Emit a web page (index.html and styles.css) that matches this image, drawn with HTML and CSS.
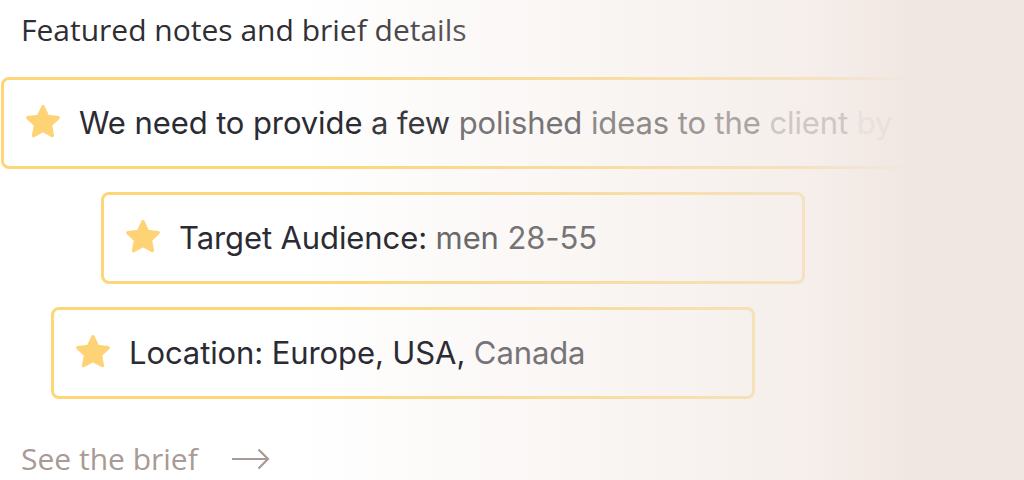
FILE: index.html
```html
<!DOCTYPE html>
<html lang="en">
<head>
<meta charset="utf-8">
<title>Featured notes</title>
<link rel="stylesheet" href="styles.css">
</head>
<body>
<main class="page">
  <h1 class="title">Featured notes and brief details</h1>
  <ul class="notes">
    <li class="note note-lead">
      <svg class="star" viewBox="2 2 20 20" aria-hidden="true"><polygon points="12,3 14.7,8.7 20.9,9.5 16.4,13.8 17.5,20 12,17 6.5,20 7.6,13.8 3.1,9.5 9.3,8.7"/></svg>
      <span class="note-text">We need to provide <span class="tone-1">a few</span> <span class="tone-3">polished</span> <span class="tone-4">ideas</span> <span class="tone-5">to</span> <span class="tone-6">the</span> <span class="tone-7">client</span> <span class="tone-8">by</span></span>
    </li>
    <li class="note note-far">
      <svg class="star" viewBox="2 2 20 20" aria-hidden="true"><polygon points="12,3 14.7,8.7 20.9,9.5 16.4,13.8 17.5,20 12,17 6.5,20 7.6,13.8 3.1,9.5 9.3,8.7"/></svg>
      <span class="note-text">Target Audience: <span class="tone-2">men</span> <span class="tone-3">28-55</span></span>
    </li>
    <li class="note note-near">
      <svg class="star" viewBox="2 2 20 20" aria-hidden="true"><polygon points="12,3 14.7,8.7 20.9,9.5 16.4,13.8 17.5,20 12,17 6.5,20 7.6,13.8 3.1,9.5 9.3,8.7"/></svg>
      <span class="note-text">Location: Europe, USA, <span class="tone-3">Canada</span></span>
    </li>
  </ul>
  <a class="brief-link" href="#">See the brief
    <svg class="arrow" viewBox="0 0 38 22" aria-hidden="true"><path d="M0 11 H36 M26.5 1.5 L36 11 L26.5 20.5"/></svg>
  </a>
  <div class="fade" aria-hidden="true"></div>
</main>
</body>
</html>
```

FILE: styles.css
```css
* { box-sizing: border-box; }

html, body {
  margin: 0;
  padding: 0;
  background: #ffffff;
}

.page {
  position: relative;
  width: 1024px;
  height: 480px;
  overflow: hidden;
  padding: 12px 0 0 0;
}

.title {
  margin: 0 0 29px 21px;
  font-family: "Open Sans", "Noto Sans", sans-serif;
  font-weight: 400;
  font-size: 30px;
  line-height: 36px;
  color: #2e2e33;
}

.notes {
  list-style: none;
  margin: 0;
  padding: 0;
  display: flex;
  flex-direction: column;
  gap: 23px;
}

.note {
  display: flex;
  align-items: center;
  gap: 19px;
  height: 92px;
  padding: 0 22px;
  border: 3px solid #fdd678;
  border-radius: 8px;
  white-space: nowrap;
}

.note-lead { margin-left: 1px; width: 1010px; }
.note-far { margin-left: 101px; width: 704px; }
.note-near { margin-left: 51px; width: 704px; }

.star {
  flex: none;
  width: 34px;
  height: 34px;
  margin-top: -3px;
  fill: #fdd375;
  stroke: #fdd375;
  stroke-width: 2;
  stroke-linejoin: round;
}

.note-text {
  position: relative;
  z-index: 2;
  font-family: "Inter", "Liberation Sans", sans-serif;
  font-size: 31px;
  line-height: 36px;
  color: #2b2b33;
  letter-spacing: -0.1px;
}

.tone-1 { color: #3a3a40; }
.tone-2 { color: #6a6869; }
.tone-3 { color: #767476; }
.tone-4 { color: #8d8a89; }
.tone-5 { color: #9c9896; }
.tone-6 { color: #aaa4a2; }
.tone-7 { color: #cec8c5; }
.tone-8 { color: #e8e1dd; }

.brief-link {
  display: flex;
  align-items: center;
  gap: 34px;
  margin: 42px 0 0 21px;
  font-family: "Open Sans", "Noto Sans", sans-serif;
  font-size: 30px;
  line-height: 36px;
  color: #a89a94;
  text-decoration: none;
}

.arrow {
  width: 38px;
  height: 22px;
  fill: none;
  stroke: #a89a94;
  stroke-width: 2.2;
}

.fade {
  position: absolute;
  z-index: 1;
  inset: 0;
  pointer-events: none;
  background: linear-gradient(to right,
    rgba(241, 231, 226, 0) 0px,
    rgba(241, 231, 226, 0) 300px,
    rgba(241, 231, 226, 0.2) 440px,
    rgba(241, 231, 226, 0.4) 600px,
    rgba(241, 231, 226, 0.68) 805px,
    rgba(241, 231, 226, 1) 910px,
    rgba(241, 231, 226, 1) 1024px);
}
```
